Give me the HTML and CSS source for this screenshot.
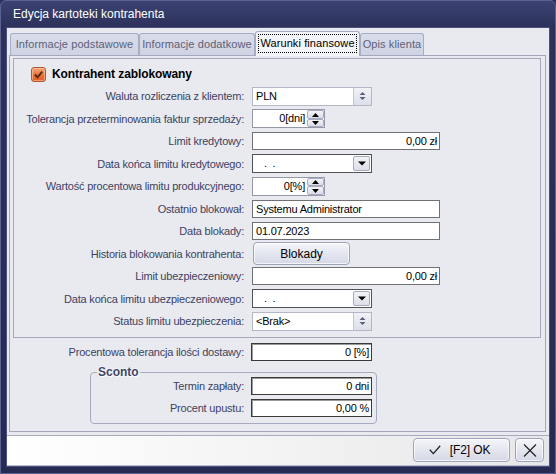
FILE: index.html
```html
<!DOCTYPE html>
<html lang="pl">
<head>
<meta charset="utf-8">
<title>Edycja kartoteki kontrahenta</title>
<link rel="stylesheet" href="styles.css">
</head>
<body>
<div class="window">
  <div class="titlebar">Edycja kartoteki kontrahenta</div>
  <div class="client">
    <div class="tabarea">
      <div class="tabs">
        <div class="tab t1">Informacje podstawowe</div>
        <div class="tab t2">Informacje dodatkowe</div>
        <div class="tab t3 active"><span class="focus">Warunki finansowe</span></div>
        <div class="tab t4">Opis klienta</div>
      </div>
      <div class="panel">
        <div class="group">
          <div class="check-row">
            <span class="checkbox"><svg width="11" height="11" viewBox="0 0 11 11"><path d="M2 5.5 L4.5 8.3 L9.2 2.6" stroke="#5b2611" stroke-width="1.9" fill="none"/></svg></span>
            <span class="check-label">Kontrahent zablokowany</span>
          </div>
          <div class="form">
            <span class="lbl">Waluta rozliczenia z klientem:</span>
            <div class="combo w120"><span class="val">PLN</span><span class="ubtn"><svg width="7" height="10" viewBox="0 0 7 10"><path d="M0.5 4 L3.5 1 L6.5 4Z M0.5 6 L3.5 9 L6.5 6Z" fill="#59607e"/></svg></span></div>

            <span class="lbl">Tolerancja przeterminowania faktur sprzedaży:</span>
            <div class="spin w73"><span class="val right">0[dni]</span><span class="sbtns"><span class="sb"><svg width="7" height="4" viewBox="0 0 7 4"><path d="M0 4 L3.5 0 L7 4Z" fill="#000"/></svg></span><span class="sb"><svg width="7" height="4" viewBox="0 0 7 4"><path d="M0 0 L3.5 4 L7 0Z" fill="#000"/></svg></span></span></div>

            <span class="lbl">Limit kredytowy:</span>
            <div class="edit w188"><span class="val right">0,00 zł</span></div>

            <span class="lbl">Data końca limitu kredytowego:</span>
            <div class="combo dark w120"><span class="val dots">.&nbsp;&nbsp;.</span><span class="dbtn"><svg width="8" height="5" viewBox="0 0 8 5"><path d="M0 0.5 H8 L4 4.5Z" fill="#000"/></svg></span></div>

            <span class="lbl">Wartość procentowa limitu produkcyjnego:</span>
            <div class="spin w73"><span class="val right">0[%]</span><span class="sbtns"><span class="sb"><svg width="7" height="4" viewBox="0 0 7 4"><path d="M0 4 L3.5 0 L7 4Z" fill="#000"/></svg></span><span class="sb"><svg width="7" height="4" viewBox="0 0 7 4"><path d="M0 0 L3.5 4 L7 0Z" fill="#000"/></svg></span></span></div>

            <span class="lbl">Ostatnio blokował:</span>
            <div class="edit w188"><span class="val">Systemu Administrator</span></div>

            <span class="lbl">Data blokady:</span>
            <div class="edit w188"><span class="val">01.07.2023</span></div>

            <span class="lbl">Historia blokowania kontrahenta:</span>
            <div class="btn blokady">Blokady</div>

            <span class="lbl">Limit ubezpieczeniowy:</span>
            <div class="edit w188"><span class="val right">0,00 zł</span></div>

            <span class="lbl">Data końca limitu ubezpieczeniowego:</span>
            <div class="combo dark w120"><span class="val dots">.&nbsp;&nbsp;.</span><span class="dbtn"><svg width="8" height="5" viewBox="0 0 8 5"><path d="M0 0.5 H8 L4 4.5Z" fill="#000"/></svg></span></div>

            <span class="lbl">Status limitu ubezpieczenia:</span>
            <div class="combo w120"><span class="val">&lt;Brak&gt;</span><span class="ubtn"><svg width="7" height="10" viewBox="0 0 7 10"><path d="M0.5 4 L3.5 1 L6.5 4Z M0.5 6 L3.5 9 L6.5 6Z" fill="#59607e"/></svg></span></div>
          </div>
        </div>

        <div class="form single">
          <span class="lbl">Procentowa tolerancja ilości dostawy:</span>
          <div class="edit sunk w121"><span class="val right">0 [%]</span></div>
        </div>

        <fieldset class="sconto">
          <legend>Sconto</legend>
          <div class="form sform">
            <span class="lbl">Termin zapłaty:</span>
            <div class="edit sunk w121"><span class="val right">0 dni</span></div>
            <span class="lbl">Procent upustu:</span>
            <div class="edit sunk w121"><span class="val right">0,00 %</span></div>
          </div>
        </fieldset>
      </div>
    </div>
    <div class="bottombar">
      <div class="btn ok"><svg width="12" height="10" viewBox="0 0 12 10"><path d="M0.8 4.8 L4.3 8.6 L11.2 0.8" stroke="#222" stroke-width="1.3" fill="none"/></svg><span>[F2] OK</span></div>
      <div class="btn close"><svg width="14" height="13" viewBox="0 0 14 13"><path d="M1 0.5 L13 12.5 M13 0.5 L1 12.5" stroke="#222" stroke-width="1.2" fill="none"/></svg></div>
    </div>
  </div>
</div>
</body>
</html>
```

FILE: styles.css
```css
* { box-sizing: border-box; }
html, body { margin: 0; padding: 0; }
body {
  width: 556px;
  height: 474px;
  overflow: hidden;
  font-family: "Liberation Sans", Arial, sans-serif;
  font-size: 11px;
  background: #2a3059;
}
.window {
  width: 556px;
  height: 474px;
  background: linear-gradient(#3c4373, #2b3159 27px, #262b52);
  border: 1px solid #5c6392;
  border-radius: 6px 6px 0 0;
  display: flex;
  flex-direction: column;
  padding: 0 6px 7px 6px;
}
.titlebar {
  height: 27px;
  line-height: 27px;
  color: #fff;
  font-size: 12px;
  padding-left: 6px;
}
.client {
  flex: 1;
  background: #e8eaf0;
  display: flex;
  flex-direction: column;
  box-shadow: 0 0 0 1px #4a5080;
}
.tabarea {
  flex: 1;
  display: flex;
  flex-direction: column;
  padding: 2px 3px 3px 2px;
}
.tabs {
  height: 25px;
  display: flex;
  align-items: flex-end;
  padding-left: 1px;
}
.tab {
  height: 22px;
  border: 1px solid #a7abc3;
  border-bottom: none;
  border-radius: 3px 3px 0 0;
  background: linear-gradient(#d9dcea, #cfd2e2);
  color: #5d6179;
  font-size: 11px;
  letter-spacing: 0.1px;
  line-height: 21px;
  text-align: center;
  white-space: nowrap;
}
.t1 { width: 129px; }
.t2 { width: 116px; }
.t3 { width: 105px; }
.t4 { width: 64px; }
.tab.active {
  height: 25px;
  background: #f3f4f8;
  color: #000;
  margin-bottom: -1px;
  position: relative;
  z-index: 1;
  padding-top: 2px;
  line-height: 18px;
}
.focus {
  display: inline-block;
  border: 1px dotted #000;
  padding: 0 1px;
  line-height: 17px;
}
.panel {
  flex: 1;
  border: 1px solid #a4a8bc;
  background: #e8eaf0;
  padding: 2px 4px 0 3px;
  display: flex;
  flex-direction: column;
}
.group {
  border: 1px solid #a4a8bc;
  padding: 5px 0 4.5px 0;
}
.check-row {
  height: 20px;
  display: flex;
  align-items: center;
  padding-left: 17px;
  gap: 6px;
  margin-bottom: 1px;
}
.checkbox {
  width: 15px;
  height: 15px;
  border: 1px solid #b4552a;
  border-radius: 3px;
  background: linear-gradient(#f6a77a, #e56c33 60%, #dd5f28);
  display: flex;
  align-items: center;
  justify-content: center;
  box-shadow: inset 0 0 0 1px rgba(255,220,190,0.5);
}
.check-label {
  font-weight: bold;
  font-size: 12px;
  letter-spacing: -0.1px;
  color: #000;
}
.form {
  display: grid;
  grid-template-columns: 230px auto;
  column-gap: 8px;
  grid-auto-rows: 22.5px;
  align-items: center;
  justify-items: start;
}
.lbl {
  justify-self: end;
  color: #3d4262;
  letter-spacing: -0.2px;
  white-space: nowrap;
}
.single {
  margin-top: 2.75px;
  padding-left: 1px;
  column-gap: 7px;
}
.edit, .combo, .spin {
  background: #fff;
  border: 1px solid #6f7177;
  display: flex;
  align-items: stretch;
  color: #000;
}
.edit { height: 18px; }
.combo { height: 19px; border-color: #b3b7c6; }
.combo.dark { border-color: #505258; }
.spin { height: 19px; border-color: #9498a8; }
.sunk { border-color: #3a3a3a; box-shadow: inset 1px 1px 0 #9a9a9a; }
.w120 { width: 120px; }
.w121 { width: 121px; }
.w73 { width: 73px; }
.w188 { width: 188px; }
.val {
  flex: 1;
  padding: 0 3px 0 3px;
  line-height: 16px;
  letter-spacing: -0.2px;
  white-space: nowrap;
  overflow: hidden;
}
.right { text-align: right; padding-right: 2px; }
.dots { padding-left: 11px; }
.ubtn, .dbtn {
  width: 18px;
  display: flex;
  align-items: center;
  justify-content: center;
  background: linear-gradient(#f1f2f7, #dcdfea);
  border-left: 1px solid #c2c6d4;
}
.dbtn {
  margin: 1px;
  border: 1px solid #a6aabe;
  border-radius: 2px;
  width: 17px;
}
.sbtns {
  width: 17px;
  display: flex;
  flex-direction: column;
}
.sb {
  flex: 1;
  display: flex;
  align-items: center;
  justify-content: center;
  border: 1px solid #a8acbf;
  border-radius: 2px;
  background: linear-gradient(#f3f4f8, #dadde8);
}
.btn {
  display: flex;
  align-items: center;
  justify-content: center;
  border: 1px solid #9ea3bb;
  border-radius: 4px;
  background: linear-gradient(#f5f6fa, #e4e6ef 50%, #d5d9e6);
  color: #000;
  font-size: 12px;
  box-shadow: inset 0 0 0 1px rgba(255,255,255,0.7);
}
.blokady {
  width: 97px;
  height: 23px;
  margin-left: 1px;
}
.sconto {
  margin: 4px 0 0 77px;
  width: 287px;
  border: 1px solid #a6aabf;
  border-radius: 4px;
  padding: 0 0 6px 0;
  min-width: 0;
}
.sconto legend {
  margin-left: 6px;
  padding: 0 1px;
  font-weight: bold;
  font-size: 12px;
  line-height: 10px;
  color: #3e4568;
  text-shadow: 0 0 2px #fff, 0 0 1px #fff, 1px 1px 1px #fff;
}
.sform {
  grid-template-columns: 153px auto;
  column-gap: 7px;
  grid-auto-rows: 18px;
  row-gap: 4px;
}
.bottombar {
  height: 31px;
  border-top: 1px solid #a6aabf;
  border-bottom: 1px solid #b9bdcd;
  background: linear-gradient(to right, #ffffff, #e7e7e9);
  display: flex;
  justify-content: flex-end;
  align-items: flex-start;
  padding: 2px 5px 0 0;
  gap: 5px;
}
.ok {
  width: 97px;
  height: 24px;
  gap: 9px;
  padding-right: 4px;
}
.ok span { letter-spacing: -0.1px; }
.close {
  width: 29px;
  height: 24px;
}
```
